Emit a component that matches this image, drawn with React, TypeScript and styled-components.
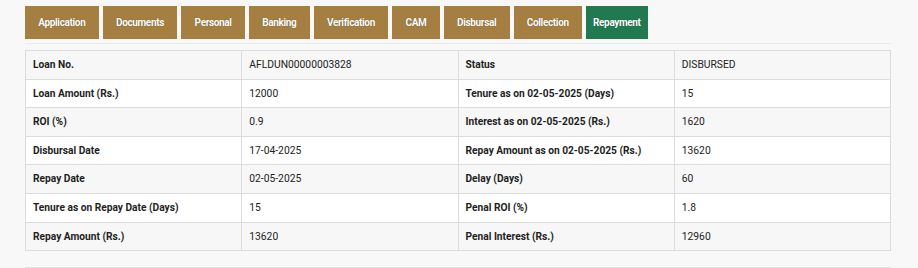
import React from 'react'
import styled, { createGlobalStyle } from 'styled-components'

const GlobalStyle = createGlobalStyle`
  body {
    margin: 0;
    background: #f8f8f8;
    font-family: Roboto, "Liberation Sans", Arial, sans-serif;
  }
`

const tabs = [
  'Application',
  'Documents',
  'Personal',
  'Banking',
  'Verification',
  'CAM',
  'Disbursal',
  'Collection',
  'Repayment',
]

const rows: [string, string, string, string][] = [
  ['Loan No.', 'AFLDUN00000003828', 'Status', 'DISBURSED'],
  ['Loan Amount (Rs.)', '12000', 'Tenure as on 02-05-2025 (Days)', '15'],
  ['ROI (%)', '0.9', 'Interest as on 02-05-2025 (Rs.)', '1620'],
  ['Disbursal Date', '17-04-2025', 'Repay Amount as on 02-05-2025 (Rs.)', '13620'],
  ['Repay Date', '02-05-2025', 'Delay (Days)', '60'],
  ['Tenure as on Repay Date (Days)', '15', 'Penal ROI (%)', '1.8'],
  ['Repay Amount (Rs.)', '13620', 'Penal Interest (Rs.)', '12960'],
]

const App: React.FC = () => {
  return (
    <Page>
      <GlobalStyle />
      <TabBar>
        {tabs.map((t) => (
          <Tab key={t} active={t === 'Repayment'}>
            {t}
          </Tab>
        ))}
      </TabBar>
      <Rule />
      <Table>
        <tbody>
          {rows.map((r, i) => (
            <Row key={i} striped={i % 2 === 0}>
              <Label>{r[0]}</Label>
              <Value>{r[1]}</Value>
              <Label>{r[2]}</Label>
              <Value>{r[3]}</Value>
            </Row>
          ))}
        </tbody>
      </Table>
      <BottomRule />
    </Page>
  )
}

export default App

const Page = styled.div`
  padding: 6px 27px 0 25px;
  width: 866px;
`

const TabBar = styled.div`
  display: flex;
  gap: 4px;
`

const Tab = styled.div<{ active?: boolean }>`
  height: 33px;
  display: flex;
  align-items: center;
  padding: ${(p) => (p.active ? '0 7px' : '0 13.3px')};
  background: ${(p) => (p.active ? '#217a4f' : '#a57f42')};
  color: #fff;
  font-size: 10px;
  font-weight: 700;
  letter-spacing: -0.35px;
  text-shadow: 0 0 1px rgba(0, 0, 0, 0.45);
  cursor: pointer;
`

const Rule = styled.div`
  height: 1px;
  background: #ebebeb;
  margin: 4px 0 6px;
`

const Table = styled.table`
  width: 100%;
  border-collapse: collapse;
  table-layout: fixed;
  color: #222;
`

const Row = styled.tr<{ striped?: boolean }>`
  background: ${(p) => (p.striped ? '#f7f7f7' : '#fff')};
`

const Label = styled.td`
  border: 1px solid #dcdcdc;
  padding: 7px 7px;
  line-height: 13.6px;
  font-size: 10.2px;
  font-weight: 700;
  color: #1e1e1e;
`

const Value = styled.td`
  border: 1px solid #dcdcdc;
  padding: 7px 7px;
  line-height: 13.6px;
  font-size: 10.3px;
  font-weight: 400;
  color: #222;
`

const BottomRule = styled.div`
  height: 1px;
  background: #e2e2e2;
  margin-top: 16px;
`
